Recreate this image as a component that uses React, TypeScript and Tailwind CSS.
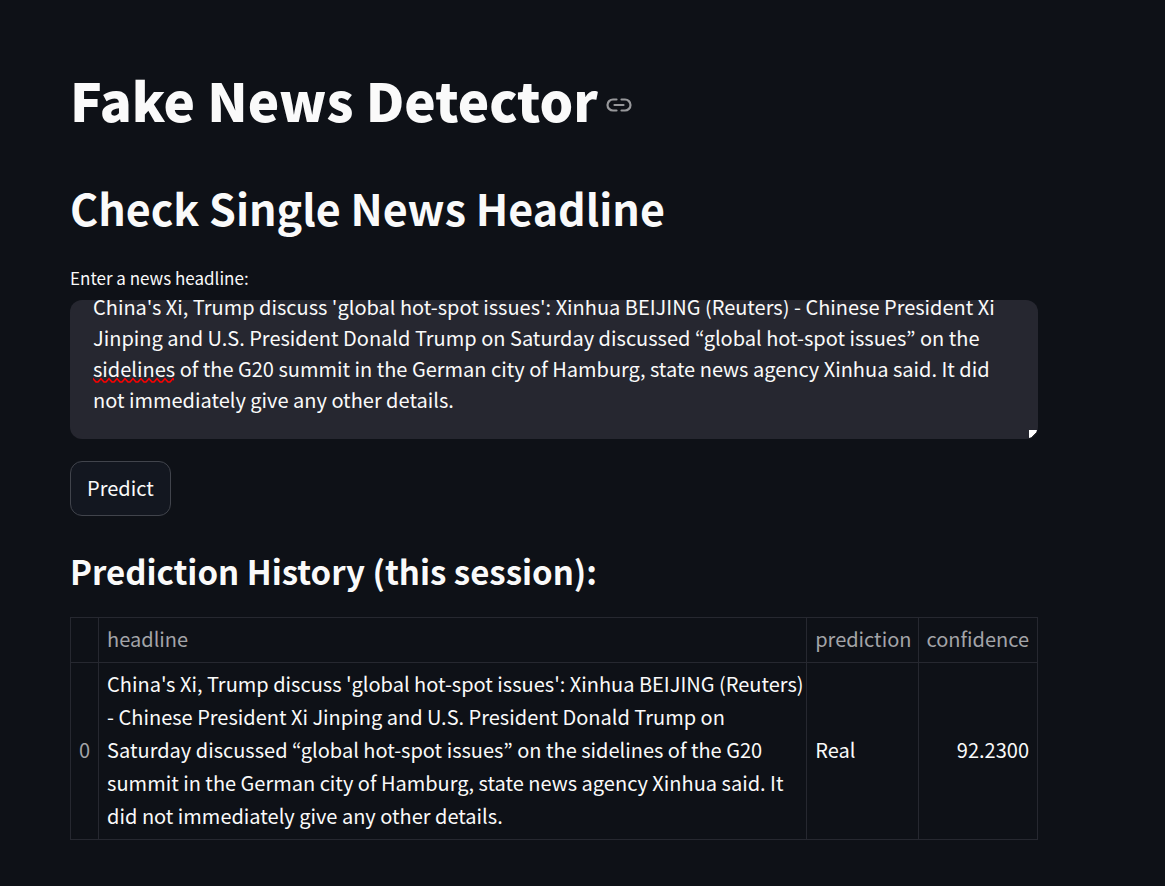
import { useEffect, useRef, useState } from 'react';

const story =
  "China's Xi, Trump discuss 'global hot-spot issues': Xinhua BEIJING (Reuters) - Chinese President Xi Jinping and U.S. President Donald Trump on Saturday discussed “global hot-spot issues” on the sidelines of the G20 summit in the German city of Hamburg, state news agency Xinhua said. It did not immediately give any other details.";

const history = [{ headline: story, prediction: 'Real', confidence: 92.23 }];

function LinkIcon() {
  return (
    <svg viewBox="0 0 26 14" className="h-[14px] w-[26px]" fill="none" stroke="currentColor" strokeWidth="2.2" strokeLinecap="round" strokeLinejoin="round" aria-hidden="true">
      <path d="M10.5 1.5H7a5.5 5.5 0 0 0 0 11h3.5M15.500 1.500H19a5.500 5.500 0 0 1 0 11h-3.500M8.500 7h9" />
    </svg>
  );
}

function SpellingMark() {
  return (
    <svg className="pointer-events-none absolute top-[77px] left-[23px] h-[7px] w-[81px]" aria-hidden="true">
      <defs>
        <pattern id="wave" width="8" height="7" patternUnits="userSpaceOnUse">
          <path d="M-2 3.500L0 1.500L3 5H5L8 1.500L10 3.500" fill="none" stroke="#f00" strokeWidth="1.5" />
        </pattern>
      </defs>
      <rect width="81" height="7" fill="url(#wave)" />
    </svg>
  );
}

function ResizeGrip() {
  return (
    <svg viewBox="0 0 8 8" className="pointer-events-none absolute right-px bottom-px h-2 w-2" aria-hidden="true">
      <path d="M0 0H8L7 3L3 7L0 8Z" fill="#fff" />
      <path d="M8 2L2 8M8 5L5 8" stroke="#333" strokeWidth="1" />
    </svg>
  );
}

export default function App() {
  const [text, setText] = useState(story);
  const box = useRef<HTMLTextAreaElement>(null);

  useEffect(() => {
    if (box.current) box.current.scrollTop = box.current.scrollHeight;
  }, []);

  return (
    <main className="min-h-screen bg-[#0e1117] pt-[67px] pr-[127px] pb-[46px] pl-[70px] font-['Noto_Sans_CJK_KR',sans-serif] text-[20px] text-[#fafafa]">
      <h1 id="fake-news-detector" className="flex items-center gap-2 text-[53px] leading-[64px] font-black">
        Fake News Detector
        <a href="#fake-news-detector" aria-label="Link to heading" className="pt-3 text-[#97989b]">
          <LinkIcon />
        </a>
      </h1>
      <h2 className="mt-12 text-[43px] leading-[56px] font-bold">Check Single News Headline</h2>
      <label htmlFor="headline" className="mt-[31px] block text-[17px] leading-6">Enter a news headline:</label>
      <div className="relative mt-[10px] overflow-hidden rounded-xl bg-[#262730]">
        <textarea
          id="headline"
          ref={box}
          value={text}
          onChange={(e) => setText(e.target.value)}
          className="block h-[139px] w-full resize-none px-[23px] py-6 text-[20px] leading-[31px] outline-none [scrollbar-width:none]"
        />
        {text === story && <SpellingMark />}
        <ResizeGrip />
      </div>
      <button type="button" className="mt-[22px] block h-[55px] rounded-xl border border-[#41444c] bg-[#131720] px-4 pb-[2px]">
        Predict
      </button>
      <h3 className="mt-[31px] text-[33px] leading-12 font-bold">Prediction History (this session):</h3>
      <table className="mt-[22px] w-full border-collapse text-left leading-[33px]">
        <thead>
          <tr className="text-[#a3a4a8]">
            <td className="border border-[#262830] px-2" />
            <th className="border border-[#262830] px-2 pt-1 pb-[7px] font-normal">headline</th>
            <th className="border border-[#262830] pt-1 pr-[7px] pb-[7px] pl-2 font-normal">prediction</th>
            <th className="border border-[#262830] pt-1 pr-2 pb-[7px] pl-[7px] text-right font-normal">confidence</th>
          </tr>
        </thead>
        <tbody>
          {history.map((row, i) => (
            <tr key={i}>
              <th className="border border-[#262830] px-2 pt-1 pb-[7px] font-normal text-[#a3a4a8]">{i}</th>
              <td className="border border-[#262830] pt-1 pb-[7px] pl-2">{row.headline}</td>
              <td className="border border-[#262830] pt-1 pr-[7px] pb-[7px] pl-2">{row.prediction}</td>
              <td className="border border-[#262830] pt-1 pr-2 pb-[7px] pl-[7px] text-right">{row.confidence.toFixed(4)}</td>
            </tr>
          ))}
        </tbody>
      </table>
    </main>
  );
}
